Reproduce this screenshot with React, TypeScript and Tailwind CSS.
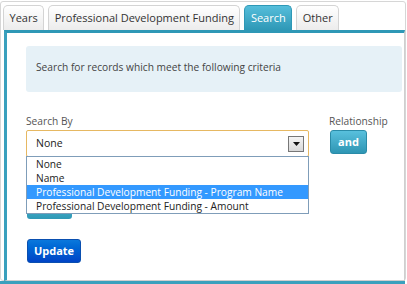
import React from "react";

const font = { fontFamily: '"Open Sans", "Liberation Sans", sans-serif' };

function Tab({ label, active }: { label: string; active?: boolean }) {
  return (
    <div
      className={
        "h-[25px] px-[5.5px] flex items-center rounded-t-[5px] border border-b-0 text-[11px] " +
        (active
          ? "bg-gradient-to-b from-[#55bedb] to-[#2e98b6] border-[#2e98b6] text-white"
          : "bg-gradient-to-b from-[#ffffff] to-[#ececec] border-[#d4d4d4] text-[#333]")
      }
    >
      {label}
    </div>
  );
}

export default function App() {
  return (
    <div className="w-[407px] h-[284px] bg-white overflow-hidden relative" style={font}>
      <div className="absolute left-0 top-[1px] w-[406px] h-[280px] border border-[#d6d6d6] rounded-[3px]" />
      <div className="relative flex flex-col h-[281px] pl-[3px] pr-[2px]">
        <div className="flex gap-[4px] pt-[5px] h-[30px] items-end">
          <Tab label="Years" />
          <Tab label="Professional Development Funding" />
          <Tab label="Search" active />
          <Tab label="Other" />
        </div>
        <div className="flex-1 ml-[1px] border-t-[3px] border-l-[3px] border-t-[#2e98b6] border-l-[#3aa0bd] border-r border-r-[#cfcfcf] border-b border-b-[#cfcfcf] bg-white pl-[19px] pr-[2px] pt-[13px] text-[#333]">
          <div className="h-[46px] bg-[#e6f1f7] rounded-[3px] flex items-center pl-[10px] pb-[2px] text-[10.2px] text-[#444]">
            Search for records which meet the following criteria
          </div>
          <div className="flex mt-[22px]">
            <div className="w-[283px] relative">
              <div className="text-[10.2px] text-[#555] leading-[14px]">Search By</div>
              <div className="mt-[2px] h-[27px] border border-[#e6b862] rounded-[2px] bg-white flex items-center pl-[9px] pr-[4px] text-[10.5px] text-[#222]">
                <span className="flex-1">None</span>
                <div className="w-[16px] h-[16px] border border-[#777] bg-gradient-to-b from-[#f4f4f4] to-[#d8d8d8] flex items-center justify-center">
                  <svg width="7" height="4" viewBox="0 0 7 4">
                    <path d="M0 0 H7 L3.5 4 Z" fill="#111" />
                  </svg>
                </div>
              </div>
              <div className="mt-[39px] ml-[1px] w-[45px] h-[23px] rounded-[3px] bg-gradient-to-b from-[#55bedb] to-[#2e98b6]" />
              <div className="absolute left-0 top-[42px] w-[283px] border border-[#7f9db9] bg-white text-[10.2px] text-[#222]">
                <div className="h-[14px] leading-[14px] pl-[9px]">None</div>
                <div className="h-[14px] leading-[14px] pl-[9px]">Name</div>
                <div className="h-[14px] leading-[14px] pl-[9px] bg-[#3399ff] text-white">
                  Professional Development Funding - Program Name
                </div>
                <div className="h-[14px] leading-[14px] pl-[9px]">Professional Development Funding - Amount</div>
              </div>
            </div>
            <div className="ml-[20px]">
              <div className="text-[10.2px] text-[#555] leading-[14px]">Relationship</div>
              <div className="mt-[2px] ml-[1px] w-[37px] h-[24px] rounded-[3px] bg-gradient-to-b from-[#58c0dd] to-[#2e96b4] border border-[#2a8ba8] text-white font-bold text-[11px] flex items-center justify-center">
                and
              </div>
            </div>
          </div>
          <div className="mt-[20px] ml-[1px] w-[54px] h-[24px] rounded-[3px] bg-gradient-to-b from-[#0b78dc] to-[#0043c6] border border-[#0a4fb0] text-white font-bold text-[11px] flex items-center justify-center">
            Update
          </div>
        </div>
      </div>
      <div className="absolute left-0 top-[281px] w-[405px] h-[3px] bg-[#3aa0bd]" />
    </div>
  );
}
